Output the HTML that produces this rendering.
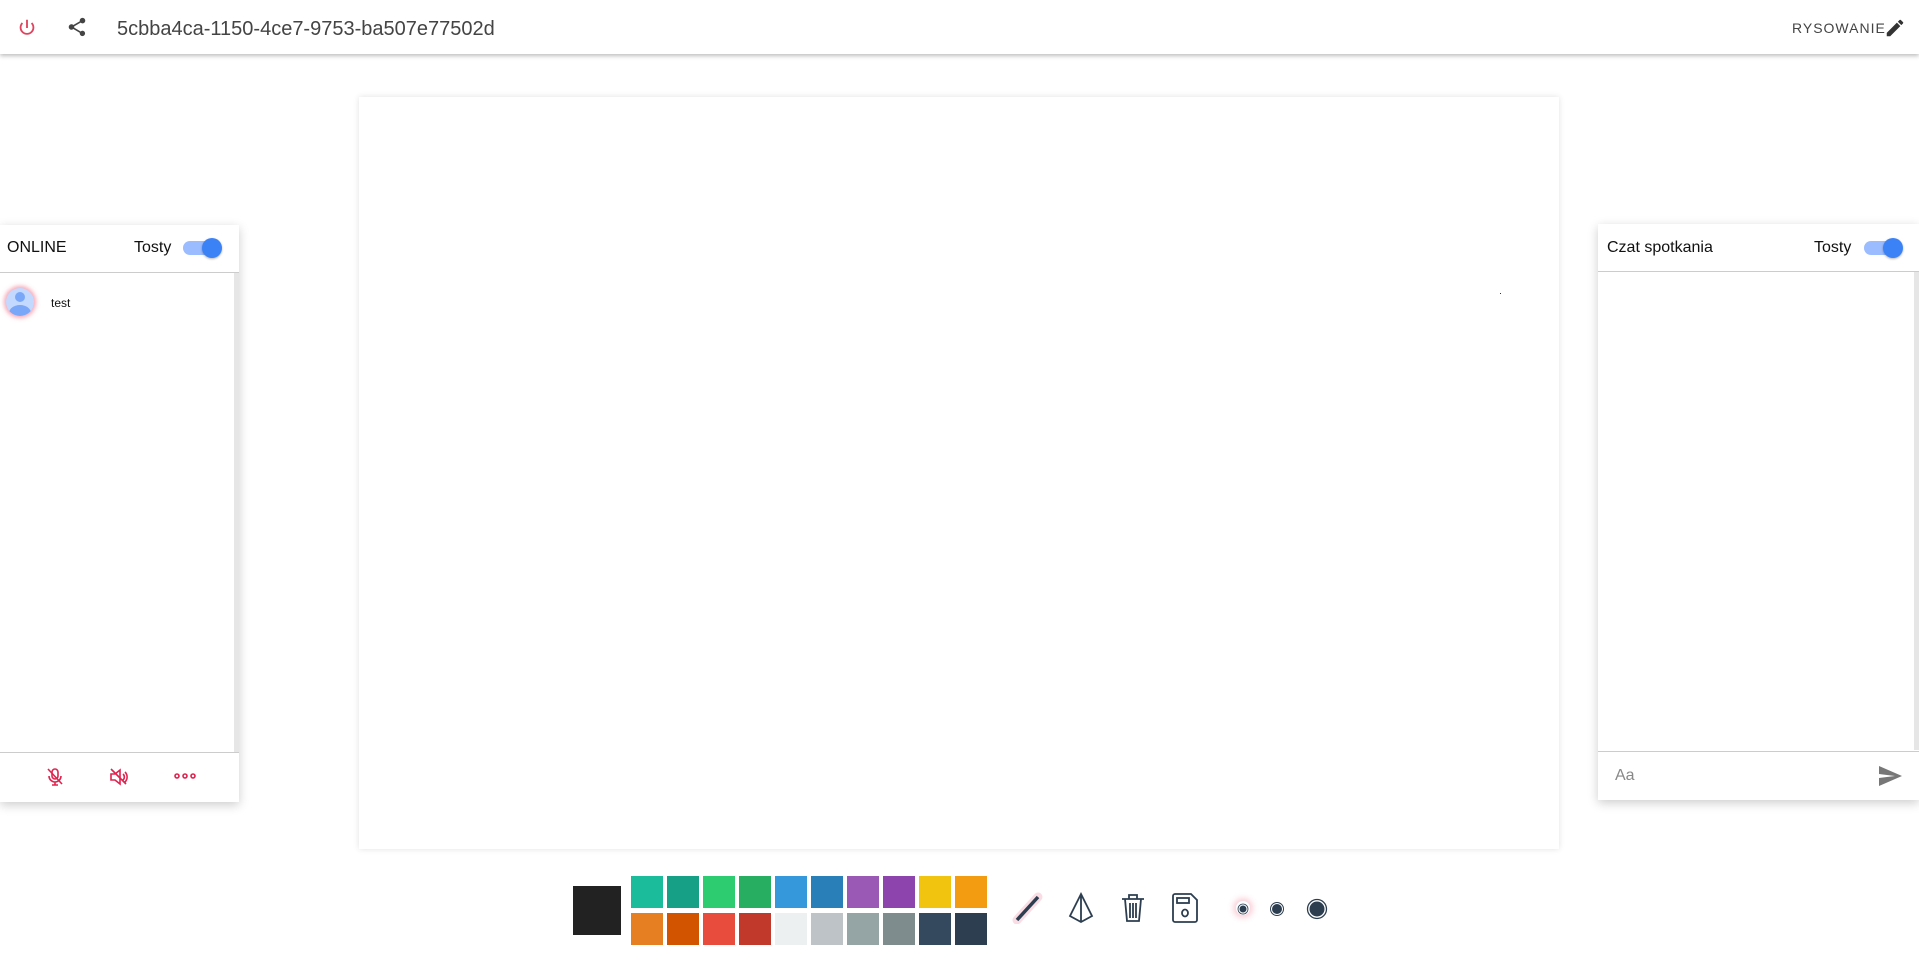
<!DOCTYPE html><html><head><style>
body{margin:0;width:1919px;height:972px;background:#fff;font-family:"Liberation Sans",sans-serif;position:relative;overflow:hidden}
.a{position:absolute}
.top{left:0;top:0;width:1919px;height:54px;background:#fff;box-shadow:0 2px 4px rgba(0,0,0,.25)}
.canvas{left:359px;top:97px;width:1200px;height:752px;background:#fff;box-shadow:0 0 6px rgba(0,0,0,.12)}
.panel{background:#fff;box-shadow:0 3px 10px rgba(0,0,0,.2)}
.tog{width:37px;height:14px;border-radius:7px;background:#9bbcff}
.tog::after{content:"";position:absolute;right:-2px;top:-3px;width:20px;height:20px;border-radius:50%;background:#3b82f6;box-shadow:0 1px 2px rgba(0,0,0,.3)}
.sw{width:32px;height:32px}
</style></head><body>
<div class="a top"></div>
<svg class="a" style="left:16px;top:16px" width="22" height="24" viewBox="0 0 24 24"><path d="M12 3v9M7 6.5a7 7 0 1 0 10 0" fill="none" stroke="#e0435e" stroke-width="2"/></svg>
<svg class="a" style="left:66px;top:16px" width="22" height="22" viewBox="0 0 24 24"><path fill="#444" d="M18 16.1c-.8 0-1.4.3-2 .8l-7.1-4.2c.1-.2.1-.5.1-.7s0-.5-.1-.7L16 7.2c.5.5 1.2.8 2 .8 1.7 0 3-1.3 3-3s-1.3-3-3-3-3 1.3-3 3c0 .2 0 .5.1.7L8 9.8C7.5 9.3 6.8 9 6 9c-1.7 0-3 1.3-3 3s1.3 3 3 3c.8 0 1.5-.3 2-.8l7.1 4.2c-.1.2-.1.4-.1.6 0 1.6 1.3 2.9 2.9 2.9s2.9-1.3 2.9-2.9-1.2-2.9-2.8-2.9z"/></svg>
<div class="a" style="left:117px;top:18px;font-size:20px;color:#444">5cbba4ca-1150-4ce7-9753-ba507e77502d</div>
<div class="a" style="left:1792px;top:20px;font-size:14px;color:#444;letter-spacing:1px">RYSOWANIE</div>
<svg class="a" style="left:1884px;top:17px" width="22" height="22" viewBox="0 0 24 24"><path fill="#333" d="M3 17.25V21h3.75L17.81 9.94l-3.75-3.75L3 17.25zM20.71 7.04a1 1 0 0 0 0-1.41l-2.34-2.34a1 1 0 0 0-1.41 0l-1.83 1.83 3.75 3.75 1.83-1.83z"/></svg>
<div class="a canvas"></div>
<div class="a" style="left:1500px;top:293px;width:1px;height:1px;background:#333"></div>

<div class="a panel" style="left:0;top:225px;width:239px;height:577px"></div>
<div class="a" style="left:0;top:272px;width:239px;height:1px;background:#ccc"></div>
<div class="a" style="left:234px;top:273px;width:5px;height:480px;background:#e6e6e6"></div>
<div class="a" style="left:0;top:752px;width:239px;height:1px;background:#ccc"></div>
<div class="a" style="left:7px;top:239px;font-size:16px;color:#111">ONLINE</div>
<div class="a" style="left:134px;top:239px;font-size:16px;color:#111">Tosty</div>
<div class="a tog" style="left:183px;top:241px"></div>
<div class="a" style="left:6px;top:288px;width:28px;height:28px;border-radius:50%;background:#c4d9ff;box-shadow:0 0 4px 2px rgba(240,80,110,.5);overflow:hidden"><div class="a" style="left:9px;top:4px;width:10px;height:10px;border-radius:50%;background:#7aa7f7"></div><div class="a" style="left:3px;top:17px;width:22px;height:16px;border-radius:50%;background:#7aa7f7"></div></div>
<div class="a" style="left:51px;top:296px;font-size:12px;color:#111">test</div>
<svg class="a" style="left:45px;top:767px" width="20" height="20" viewBox="0 0 20 20" fill="none" stroke="#e0234e" stroke-width="1.6"><rect x="7" y="2" width="6" height="10" rx="3"/><path d="M4 9a6 6 0 0 0 12 0M10 15v3M7 18h6M3 2l14 15"/></svg>
<svg class="a" style="left:109px;top:767px" width="22" height="20" viewBox="0 0 22 20" fill="none" stroke="#e0234e" stroke-width="1.6"><path d="M2 7h4l5-4v14l-5-4H2z"/><path d="M14 7a4 4 0 0 1 0 6M16 5a7 7 0 0 1 0 10M2 2l15 15"/></svg>
<svg class="a" style="left:174px;top:772px" width="22" height="8" viewBox="0 0 22 8" fill="none" stroke="#e0234e" stroke-width="1.6"><circle cx="3" cy="4" r="2"/><circle cx="11" cy="4" r="2"/><circle cx="19" cy="4" r="2"/></svg>

<div class="a panel" style="left:1598px;top:224px;width:321px;height:576px"></div>
<div class="a" style="left:1598px;top:271px;width:321px;height:1px;background:#ccc"></div>
<div class="a" style="left:1914px;top:272px;width:5px;height:478px;background:#e6e6e6"></div>
<div class="a" style="left:1598px;top:751px;width:321px;height:1px;background:#ccc"></div>
<div class="a" style="left:1607px;top:239px;font-size:16px;color:#111">Czat spotkania</div>
<div class="a" style="left:1814px;top:239px;font-size:16px;color:#111">Tosty</div>
<div class="a tog" style="left:1864px;top:241px"></div>
<div class="a" style="left:1615px;top:767px;font-size:16px;color:#888">Aa</div>
<svg class="a" style="left:1878px;top:765px" width="24" height="22" viewBox="0 0 24 22"><path fill="#777" d="M1 21 24 11 1 1v8l16 2-16 2z"/></svg>

<div class="a" style="left:573px;top:886px;width:48px;height:49px;background:#222"></div>
<div class="a" style="left:631px;top:876px;display:grid;grid-template-columns:repeat(10,32px);gap:5px 4px">
<div class="sw" style="background:#1abc9c"></div><div class="sw" style="background:#16a085"></div><div class="sw" style="background:#2ecc71"></div><div class="sw" style="background:#27ae60"></div><div class="sw" style="background:#3498db"></div><div class="sw" style="background:#2980b9"></div><div class="sw" style="background:#9b59b6"></div><div class="sw" style="background:#8e44ad"></div><div class="sw" style="background:#f1c40f"></div><div class="sw" style="background:#f39c12"></div>
<div class="sw" style="background:#e67e22"></div><div class="sw" style="background:#d35400"></div><div class="sw" style="background:#e74c3c"></div><div class="sw" style="background:#c0392b"></div><div class="sw" style="background:#ecf0f1"></div><div class="sw" style="background:#bdc3c7"></div><div class="sw" style="background:#95a5a6"></div><div class="sw" style="background:#7f8c8d"></div><div class="sw" style="background:#34495e"></div><div class="sw" style="background:#2c3e50"></div>
</div>
<svg class="a" style="left:1012px;top:892px" width="32" height="32" viewBox="0 0 32 32"><path d="M5 28 26 5" stroke="#f3a0b5" stroke-width="9" stroke-linecap="round" opacity=".35"/><path d="M5 28 26 5" stroke="#2c3e50" stroke-width="3.5"/></svg>
<svg class="a" style="left:1066px;top:892px" width="30" height="32" viewBox="0 0 30 32" fill="none" stroke="#2c3e50" stroke-width="1.8"><path d="M15 2 4 24l11 6 11-6z M15 2v28"/></svg>
<svg class="a" style="left:1120px;top:893px" width="26" height="30" viewBox="0 0 26 30" fill="none" stroke="#2c3e50" stroke-width="1.8"><path d="M2 6h22M9 6V2h8v4M5 6l2 22h12l2-22M10 10v15M13 10v15M16 10v15"/></svg>
<svg class="a" style="left:1171px;top:893px" width="28" height="30" viewBox="0 0 28 30" fill="none" stroke="#2c3e50" stroke-width="1.8"><path d="M2 3a2 2 0 0 1 2-2h16l6 6v20a2 2 0 0 1-2 2H4a2 2 0 0 1-2-2z"/><rect x="6" y="5" width="12" height="5"/><ellipse cx="14" cy="20" rx="3" ry="3.5"/></svg>
<div class="a" style="left:1236px;top:901px;width:14px;height:14px;border-radius:50%;box-shadow:0 0 6px 3px rgba(240,100,130,.3)"></div>
<svg class="a" style="left:1230px;top:896px" width="100" height="26" viewBox="0 0 100 26"><circle cx="13" cy="13" r="4" fill="#2c3e50" stroke="#fff" stroke-width="1"/><circle cx="13" cy="13" r="5" fill="none" stroke="#2c3e50" stroke-width=".8"/><circle cx="47" cy="13" r="5" fill="#2c3e50"/><circle cx="47" cy="13" r="6.5" fill="none" stroke="#2c3e50" stroke-width="1"/><circle cx="87" cy="13" r="7.5" fill="#2c3e50"/><circle cx="87" cy="13" r="9.5" fill="none" stroke="#2c3e50" stroke-width="1.3"/></svg>
</body></html>
